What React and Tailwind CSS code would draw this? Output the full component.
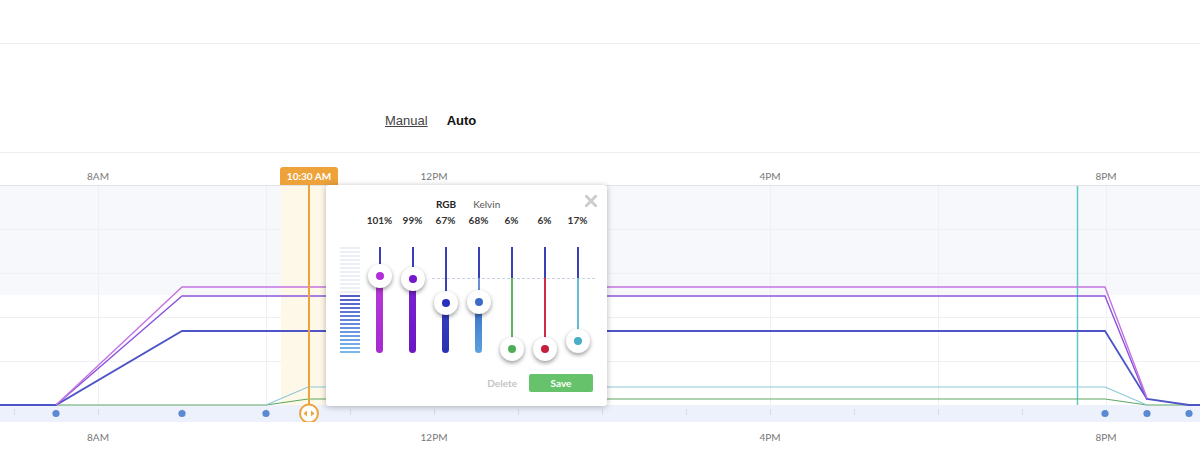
import React from "react";

const channels = [
  { p: "101%", y: 29, dot: "bg-[#b02fd6]", bar: "bg-gradient-to-b from-[#b83ad8] to-[#a52bcf]", mid: "bg-[#3b3fb5]" },
  { p: "99%", y: 32, dot: "bg-[#7418cc]", bar: "bg-gradient-to-b from-[#7d22d2] to-[#6a16c2]", mid: "bg-[#3b3fb5]" },
  { p: "67%", y: 56, dot: "bg-[#2a2fbd]", bar: "bg-gradient-to-b from-[#3a42c6] to-[#2a30b2]", mid: "bg-[#3b3fb5]" },
  { p: "68%", y: 55, dot: "bg-[#3a6cc8]", bar: "bg-gradient-to-b from-[#3a6cc8] to-[#5ca2de]", mid: "bg-[#6a8fd6]" },
  { p: "6%", y: 102, dot: "bg-[#4fae55]", bar: "", mid: "bg-[#5cb860]" },
  { p: "6%", y: 102, dot: "bg-[#c41f3c]", bar: "", mid: "bg-[#d02a44]" },
  { p: "17%", y: 94, dot: "bg-[#4aaec6]", bar: "", mid: "bg-[#66bcd2]" },
];

function stripeColors() {
  const out = [];
  for (let i = 0; i < 27; i++) {
    if (i < 12) out.push("#eceff5");
    else {
      const t = (i - 12) / 14;
      const a = [0x55, 0x5c, 0xcc];
      const b = [0x78, 0xb8, 0xea];
      const c = a.map((v, k) => Math.round(v + (b[k] - v) * t));
      out.push(`rgb(${c[0]},${c[1]},${c[2]})`);
    }
  }
  return out;
}

function Slider({ c }) {
  const split = 31;
  return (
    <div className="relative w-[33px] h-[106px]">
      <div
        className="absolute left-[15.5px] w-[2px] top-0 bg-[#3b3fb5]"
        style={{ height: Math.min(c.y, split) }}
      />
      {c.y > split && (
        <div
          className={`absolute left-[15.5px] w-[2px] ${c.mid}`}
          style={{ top: split, height: c.y - split }}
        />
      )}
      {c.bar && (
        <div
          className={`absolute left-[13px] w-[7px] bottom-0 rounded-full ${c.bar}`}
          style={{ top: c.y }}
        />
      )}
      <div
        className="absolute left-[4.5px] w-6 h-6 rounded-full bg-white shadow-[0_2px_4px_rgba(0,0,0,0.4)] flex items-center justify-center"
        style={{ top: c.y - 12 }}
      >
        <div className={`w-2 h-2 rounded-full ${c.dot}`} />
      </div>
    </div>
  );
}

function Popup() {
  const stripes = stripeColors();
  return (
    <div className="absolute left-[326px] top-[32px] w-[281px] h-[221px] bg-white rounded-[3px] shadow-[0_1px_6px_rgba(0,0,0,0.28)] font-['Lato',sans-serif]">
      <svg className="absolute top-[10px] right-[10px]" width="12" height="12" viewBox="0 0 12 12">
        <path d="M1 1 L11 11 M11 1 L1 11" stroke="#cdcdcd" strokeWidth="3" strokeLinecap="round" />
      </svg>
      <div className="flex pl-[110px] gap-[17px] pt-[13px] text-[10px] leading-[12px]">
        <span className="font-bold text-[#222]">RGB</span>
        <span className="text-[#555]">Kelvin</span>
      </div>
      <div className="flex pl-[37px] mt-[4px] text-[10px] leading-[12px] font-bold text-[#333]">
        {channels.map((c, i) => (
          <div key={i} className="w-[33px] text-center">{c.p}</div>
        ))}
      </div>
      <div className="relative flex mt-[21px] pl-[14px] h-[106px]">
        <div className="absolute left-[106px] right-[12px] top-[31px] border-t border-dashed border-[#c9d3e3]" />
        <div className="flex flex-col gap-[2px] w-[20px]">
          {stripes.map((col, i) => (
            <div key={i} className="h-[2px]" style={{ backgroundColor: col }} />
          ))}
        </div>
        <div className="flex ml-[3px]">
          {channels.map((c, i) => (
            <Slider key={i} c={c} />
          ))}
        </div>
      </div>
      <div className="flex justify-end items-center pr-[14px] gap-[12px] mt-[21px]">
        <span className="text-[10px] font-bold text-[#c4c4c4]">Delete</span>
        <div className="w-[64px] h-[18px] rounded-[2px] bg-[#67c36b] text-white text-[10px] font-bold flex items-center justify-center">
          Save
        </div>
      </div>
    </div>
  );
}

function Chart() {
  const hGrid = [229, 273, 317, 361];
  const vGrid = [98, 266, 434, 602, 770, 938, 1106];
  const ticks = [];
  for (let x = 14; x < 1200; x += 84) ticks.push(x);
  const dots = [56, 182, 266, 1105, 1147, 1189];
  return (
    <svg width="1200" height="237" viewBox="0 185 1200 237" className="block">
      <rect x="0" y="185" width="1200" height="110" fill="#f7f8fc" />
      <rect x="0" y="295" width="1200" height="110" fill="#ffffff" />
      {hGrid.map((y) => (
        <line key={y} x1="0" x2="1200" y1={y + 0.5} y2={y + 0.5} stroke="#eef0f4" strokeWidth="1" />
      ))}
      {vGrid.map((x) => (
        <line key={x} x1={x + 0.5} x2={x + 0.5} y1="185" y2="405" stroke="#edeff4" strokeWidth="1" />
      ))}
      <line x1="0" x2="1200" y1="185.5" y2="185.5" stroke="#e1e3e9" strokeWidth="1" />
      <rect x="281" y="186" width="56" height="219" fill="#fdf8e8" />
      <line x1="1077.5" x2="1077.5" y1="186" y2="405" stroke="#5fcac4" strokeWidth="1.5" />
      <rect x="0" y="405" width="1200" height="17" fill="#edf1fb" />
      {ticks.map((x) => (
        <line key={x} x1={x + 0.5} x2={x + 0.5} y1="409" y2="415" stroke="#d7dbe6" strokeWidth="1" />
      ))}
      <polyline points="56,405 266,405 308,399 1105,399 1147,405 1200,405" fill="none" stroke="#5ea862" strokeWidth="1.2" />
      <polyline points="266,405 308,387 1105,387 1147,405" fill="none" stroke="#8cc8d8" strokeWidth="1.2" />
      <polyline points="0,405 56,405 182,331 1105,331 1147,399 1189,405 1200,405" fill="none" stroke="#4d54c6" strokeWidth="1.8" />
      <polyline points="56,405 182,296 1105,296 1147,400" fill="none" stroke="#8a55dc" strokeWidth="1.4" />
      <polyline points="56,405 182,287 1105,287 1147,398" fill="none" stroke="#c673e2" strokeWidth="1.4" />
      <line x1="309" x2="309" y1="185" y2="404" stroke="#eea23a" strokeWidth="2" />
      {dots.map((x) => (
        <circle key={x} cx={x} cy="413.5" r="3.6" fill="#5b89d4" />
      ))}
      <circle cx="309" cy="413.5" r="9" fill="#ffffff" stroke="#eea23a" strokeWidth="2" />
      <polygon points="303.5,413.5 307,410.5 307,416.5" fill="#eea23a" />
      <polygon points="314.5,413.5 311,410.5 311,416.5" fill="#eea23a" />
    </svg>
  );
}

function AxisLabels({ className }) {
  return (
    <div className={`flex pl-[68px] gap-[276px] text-[10px] leading-[12px] text-[#777] font-['Lato',sans-serif] ${className}`}>
      {["8AM", "12PM", "4PM", "8PM"].map((l) => (
        <div key={l} className="w-[60px] text-center">{l}</div>
      ))}
    </div>
  );
}

export default function App() {
  return (
    <div className="w-[1200px] h-[458px] bg-white overflow-hidden relative">
      <div className="h-[44px] border-b border-[#eeeeee]" />
      <div className="h-[109px] border-b border-[#eeeeee] flex pl-[385px] gap-[19px] pt-[69px] text-[13px] leading-4 font-['Liberation_Sans',Arial,sans-serif]">
        <span className="underline text-[#444]">Manual</span>
        <span className="font-bold text-[#111]">Auto</span>
      </div>
      <div className="relative">
        <AxisLabels className="h-[32px] pt-[17px]" />
        <Chart />
        <AxisLabels className="pt-[9px]" />
        <div className="absolute left-[280px] top-[14px] w-[58px] h-[18px] rounded-t-[3px] bg-[#eda23a] text-white text-[10px] font-bold font-['Lato',sans-serif] flex items-center justify-center">
          10:30 AM
        </div>
        <Popup />
      </div>
    </div>
  );
}
